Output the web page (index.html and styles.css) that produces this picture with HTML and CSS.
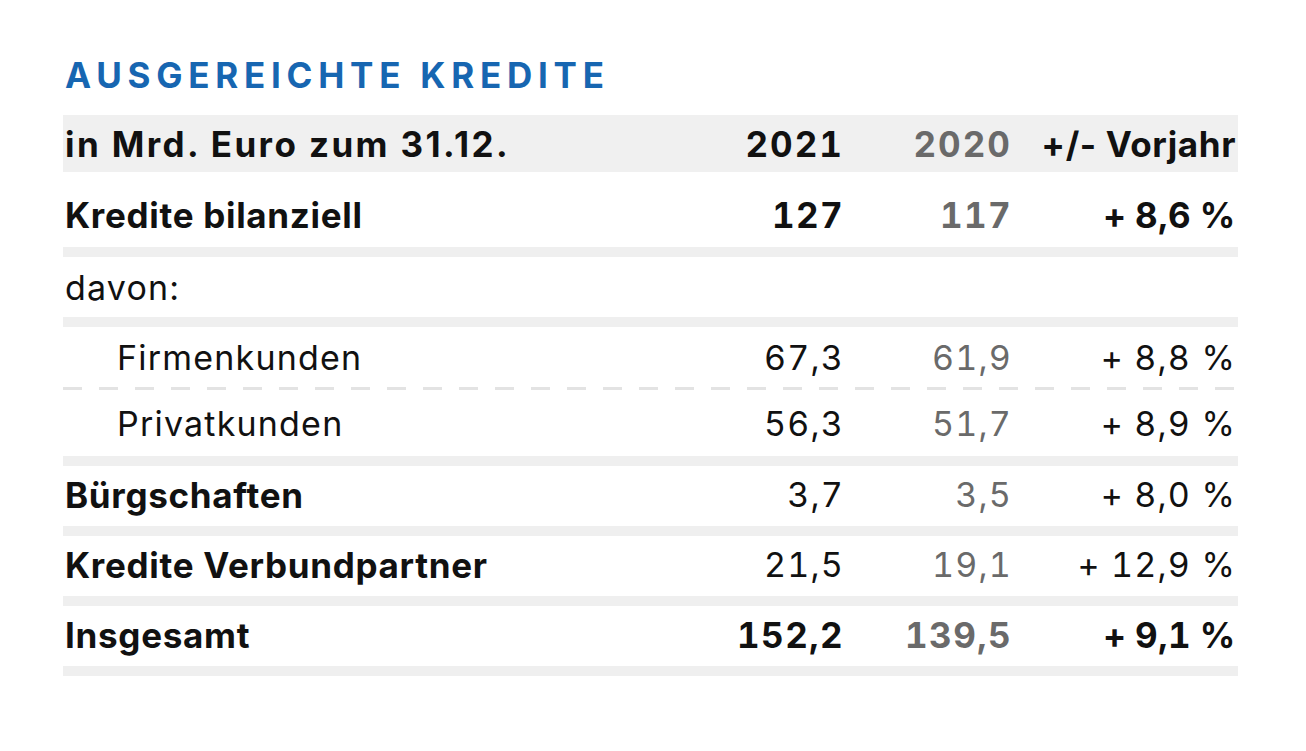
FILE: index.html
```html
<!DOCTYPE html>
<html lang="de">
<head>
<meta charset="utf-8">
<title>Ausgereichte Kredite</title>
<link rel="stylesheet" href="styles.css">
</head>
<body>
<main class="wrap">
  <h1 class="title">AUSGEREICHTE KREDITE</h1>
  <div class="table">
    <div class="row head">
      <div class="label">in Mrd. Euro zum 31.12.</div>
      <div class="num fig">2021</div>
      <div class="num fig prev">2020</div>
      <div class="num delta">+/- Vorjahr</div>
    </div>
    <div class="row bold first sep">
      <div class="label">Kredite bilanziell</div>
      <div class="num fig">127</div>
      <div class="num fig prev">117</div>
      <div class="num fig delta">+ 8,6 %</div>
    </div>
    <div class="row light sep">
      <div class="label">davon:</div>
      <div class="num"></div>
      <div class="num prev"></div>
      <div class="num"></div>
    </div>
    <div class="row light sub dashed">
      <div class="label">Firmenkunden</div>
      <div class="num fig">67,3</div>
      <div class="num fig prev">61,9</div>
      <div class="num fig">+ 8,8 %</div>
    </div>
    <div class="row light sub sep tall">
      <div class="label">Privatkunden</div>
      <div class="num fig">56,3</div>
      <div class="num fig prev">51,7</div>
      <div class="num fig">+ 8,9 %</div>
    </div>
    <div class="row mixed sep lift">
      <div class="label">Bürgschaften</div>
      <div class="num fig">3,7</div>
      <div class="num fig prev">3,5</div>
      <div class="num fig">+ 8,0 %</div>
    </div>
    <div class="row mixed sep lift">
      <div class="label">Kredite Verbundpartner</div>
      <div class="num fig">21,5</div>
      <div class="num fig prev">19,1</div>
      <div class="num fig">+ 12,9 %</div>
    </div>
    <div class="row bold sep lift">
      <div class="label">Insgesamt</div>
      <div class="num fig">152,2</div>
      <div class="num fig prev">139,5</div>
      <div class="num fig delta">+ 9,1 %</div>
    </div>
  </div>
</main>
</body>
</html>
```
FILE: styles.css
```css
html, body {
  margin: 0;
  padding: 0;
  background: #ffffff;
}

.wrap {
  padding: 54px 68px 0 63px;
}

.title {
  margin: 0 0 19px 2px;
  font-family: Inter, "Liberation Sans", sans-serif;
  font-weight: 700;
  font-size: 35px;
  line-height: 42px;
  letter-spacing: 5.75px;
  color: #1766b1;
}

.table {
  width: 1175px;
}

.row {
  display: grid;
  grid-template-columns: 1fr 200px 168px 224px;
  align-items: center;
  padding: 0 2px 0 2px;
  height: 60px;
  box-sizing: content-box;
  color: #111111;
}

.row .label,
.row .num {
  white-space: nowrap;
}

.num {
  text-align: right;
}

.fig {
  font-variant-numeric: tabular-nums;
}

.prev {
  color: #6a6a6a;
}

.head {
  height: 57px;
  background: #f0f0f0;
  font-family: Inter, "Liberation Sans", sans-serif;
  font-weight: 700;
  font-size: 35px;
  letter-spacing: 2.4px;
}

.head .fig {
  letter-spacing: 2px;
}

.head .delta {
  letter-spacing: 0.6px;
}

.bold {
  font-family: Inter, "Liberation Sans", sans-serif;
  font-weight: 700;
  font-size: 35px;
  letter-spacing: 0.7px;
}

.bold .fig {
  letter-spacing: 1.4px;
}

.bold .delta {
  letter-spacing: 0.6px;
  word-spacing: -1.5px;
}

.first {
  height: 64px;
  padding-top: 11px;
}

.light,
.mixed {
  font-family: Inter, "Noto Sans", sans-serif;
  font-weight: 400;
  font-size: 34px;
  letter-spacing: 1.2px;
}

.mixed .label {
  font-family: Inter, "Liberation Sans", sans-serif;
  font-weight: 700;
  font-size: 35px;
  letter-spacing: 0.7px;
}

.lift {
  height: 57px;
  padding-bottom: 3px;
}

.sub .label {
  padding-left: 52px;
}

.sep {
  border-bottom: 10px solid #efefef;
}

.dashed {
  height: 60px;
  padding-bottom: 3px;
  background-image: repeating-linear-gradient(90deg, #e3e3e3 0 19px, transparent 19px 36px);
  background-size: 100% 3px;
  background-position: left bottom;
  background-repeat: no-repeat;
}

.tall {
  height: 66px;
}
```
